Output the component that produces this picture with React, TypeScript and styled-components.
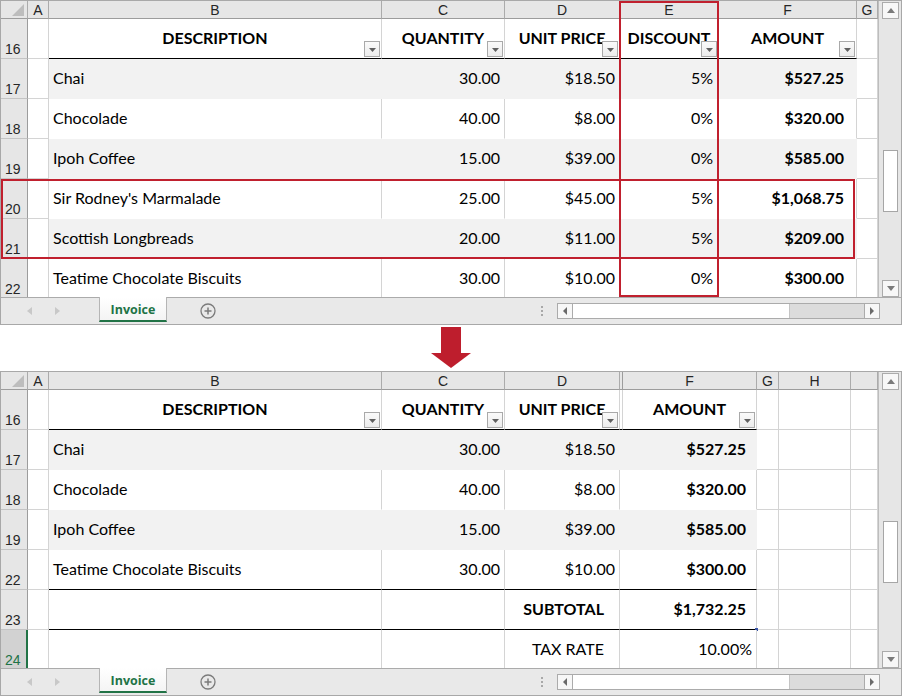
import React from "react";
import styled, { createGlobalStyle } from "styled-components";

// 시트 데이터
type Col = { letter: string; width: number; field?: number; pad?: number; hidden?: boolean };
type RowKind = "head" | "item" | "subtotal" | "tax";
type Row = {
  num: number;
  kind: RowKind;
  cells: string[];
  band?: boolean;
  ruleBelow?: boolean;
  handle?: boolean;
  selected?: boolean;
};

const topCols: Col[] = [
  { letter: "A", width: 21 },
  { letter: "B", width: 333, field: 0, pad: 4 },
  { letter: "C", width: 123, field: 1, pad: 4 },
  { letter: "D", width: 115, field: 2, pad: 4 },
  { letter: "E", width: 99, field: 3, pad: 5 },
  { letter: "F", width: 138, field: 4, pad: 12 },
  { letter: "G", width: 21 },
];

const bottomCols: Col[] = [
  { letter: "A", width: 21 },
  { letter: "B", width: 333, field: 0, pad: 4 },
  { letter: "C", width: 123, field: 1, pad: 4 },
  { letter: "D", width: 115, field: 2, pad: 4 },
  { letter: "", width: 3, field: 3, hidden: true },
  { letter: "F", width: 134, field: 4, pad: 10 },
  { letter: "G", width: 22 },
  { letter: "H", width: 72 },
  { letter: "", width: 27 },
];

const headRow: Row = {
  num: 16,
  kind: "head",
  cells: ["DESCRIPTION", "QUANTITY", "UNIT PRICE", "DISCOUNT", "AMOUNT"],
  ruleBelow: true,
};

const items: Record<number, Row> = {
  17: { num: 17, kind: "item", band: true, cells: ["Chai", "30.00", "$18.50", "5%", "$527.25"] },
  18: { num: 18, kind: "item", cells: ["Chocolade", "40.00", "$8.00", "0%", "$320.00"] },
  19: { num: 19, kind: "item", band: true, cells: ["Ipoh Coffee", "15.00", "$39.00", "0%", "$585.00"] },
  20: { num: 20, kind: "item", cells: ["Sir Rodney's Marmalade", "25.00", "$45.00", "5%", "$1,068.75"] },
  21: { num: 21, kind: "item", band: true, cells: ["Scottish Longbreads", "20.00", "$11.00", "5%", "$209.00"] },
  22: { num: 22, kind: "item", cells: ["Teatime Chocolate Biscuits", "30.00", "$10.00", "0%", "$300.00"] },
};

const topRows: Row[] = [headRow, items[17], items[18], items[19], items[20], items[21], items[22]];

const bottomRows: Row[] = [
  headRow,
  items[17],
  items[18],
  items[19],
  { ...items[22], ruleBelow: true },
  { num: 23, kind: "subtotal", cells: ["", "", "SUBTOTAL", "", "$1,732.25"], ruleBelow: true, handle: true },
  { num: 24, kind: "tax", cells: ["", "", "TAX RATE", "", "10.00%"], selected: true },
];

const cellLayout = (col: Col, row: Row) => {
  const field = col.field ?? 0;
  if (row.kind === "head") return { align: "center", pad: 0, strong: true };
  if (field === 0) return { align: "left", pad: col.pad ?? 4, strong: false };
  if (row.kind === "subtotal") return { align: "right", pad: field === 2 ? 15 : col.pad ?? 4, strong: true };
  if (row.kind === "tax") return { align: "right", pad: field === 2 ? 15 : 4, strong: false };
  return { align: "right", pad: col.pad ?? 4, strong: field === 4 };
};

const Sheet: React.FC<{ cols: Col[]; rows: Row[]; marks?: React.ReactNode }> = ({ cols, rows, marks }) => {
  const template = ["27px", ...cols.map(c => `${c.width}px`)].join(" ");
  return (
    <SheetWindow>
      <Body>
        <GridArea $cols={template}>
          <Corner>
            <svg width="12" height="12" viewBox="0 0 12 12">
              <path d="M12 0 L12 12 L0 12 Z" fill="#bdbdbd" />
            </svg>
          </Corner>
          {cols.map((c, i) => (
            <ColHead key={`h${i}`} $hidden={c.hidden}>{c.letter}</ColHead>
          ))}
          {rows.map(row => (
            <React.Fragment key={row.num}>
              <RowHead $selected={row.selected}>{row.num}</RowHead>
              {cols.map((col, i) => {
                if (col.field === undefined) return <BlankCell key={i} />;
                const layout = cellLayout(col, row);
                const text = col.hidden ? "" : row.cells[col.field];
                return (
                  <Cell
                    key={i}
                    $band={row.band}
                    $align={layout.align}
                    $pad={layout.pad}
                    $strong={layout.strong}
                    $ruleBelow={row.ruleBelow}
                    $handle={row.handle && col.field === 4}
                  >
                    {text}
                    {row.kind === "head" && !col.hidden && (
                      <Dropdown>
                        <svg width="7" height="4" viewBox="0 0 7 4">
                          <path d="M0 0 H7 L3.5 4 Z" fill="#606060" />
                        </svg>
                      </Dropdown>
                    )}
                  </Cell>
                );
              })}
            </React.Fragment>
          ))}
        </GridArea>
        <VScroll>
          <ScrollButton>
            <svg width="8" height="5" viewBox="0 0 8 5">
              <path d="M0 5 H8 L4 0 Z" fill="#7a7a7a" />
            </svg>
          </ScrollButton>
          <VTrack>
            <VThumb />
          </VTrack>
          <ScrollButton>
            <svg width="8" height="5" viewBox="0 0 8 5">
              <path d="M0 0 H8 L4 5 Z" fill="#7a7a7a" />
            </svg>
          </ScrollButton>
        </VScroll>
        {marks}
      </Body>
      <TabBar>
        <NavArrows>
          <svg width="5" height="8" viewBox="0 0 5 8">
            <path d="M5 0 V8 L0 4 Z" fill="#c8c8c8" />
          </svg>
          <svg width="5" height="8" viewBox="0 0 5 8">
            <path d="M0 0 V8 L5 4 Z" fill="#c8c8c8" />
          </svg>
        </NavArrows>
        <Tab>Invoice</Tab>
        <AddSheet>
          <svg width="16" height="16" viewBox="0 0 16 16">
            <circle cx="8" cy="8" r="7" fill="none" stroke="#7b7b7b" strokeWidth="1.3" />
            <path d="M8 4.5 V11.5 M4.5 8 H11.5" stroke="#7b7b7b" strokeWidth="1.5" />
          </svg>
        </AddSheet>
        <Spacer />
        <Grip>
          <i />
          <i />
          <i />
        </Grip>
        <HScroll>
          <HButton>
            <svg width="4" height="8" viewBox="0 0 4 8">
              <path d="M4 0 V8 L0 4 Z" fill="#6a6a6a" />
            </svg>
          </HButton>
          <HThumb />
          <HTrack />
          <HButton>
            <svg width="4" height="8" viewBox="0 0 4 8">
              <path d="M0 0 V8 L4 4 Z" fill="#6a6a6a" />
            </svg>
          </HButton>
        </HScroll>
      </TabBar>
    </SheetWindow>
  );
};

const App: React.FC = () => (
  <Page>
    <GlobalStyle />
    <Sheet
      cols={topCols}
      rows={topRows}
      marks={
        <>
          <Mark $left={0} $top={178} $width={854} $height={80} />
          <Mark $left={618} $top={0} $width={100} $height={296} />
        </>
      }
    />
    <ArrowGap>
      <svg width="40" height="43" viewBox="0 0 40 43">
        <rect x="10" y="1" width="20" height="26" fill="#be1e2d" />
        <polygon points="0,27 40,27 20,42" fill="#be1e2d" />
      </svg>
    </ArrowGap>
    <Sheet cols={bottomCols} rows={bottomRows} />
  </Page>
);

// 스타일 컴포넌트
const GlobalStyle = createGlobalStyle`
  html, body {
    margin: 0;
    padding: 0;
    background: #fff;
  }
  body {
    font-family: "Lato", "Liberation Sans", sans-serif;
  }
`;

const Page = styled.div`
  width: 902px;
  display: flex;
  flex-direction: column;
`;

const SheetWindow = styled.div`
  height: 325px;
  box-sizing: border-box;
  border: 1px solid #a8a8a8;
  display: flex;
  flex-direction: column;
  background: #fff;
`;

const Body = styled.div`
  position: relative;
  display: flex;
  height: 296px;
`;

const GridArea = styled.div<{ $cols: string }>`
  flex: 1;
  overflow: hidden;
  display: grid;
  grid-template-columns: ${p => p.$cols};
  grid-template-rows: 18px;
  grid-auto-rows: 40px;
  align-content: start;
`;

const Corner = styled.div`
  box-sizing: border-box;
  background: #e6e6e6;
  border-right: 1px solid #ababab;
  border-bottom: 1px solid #9c9c9c;
  display: flex;
  align-items: flex-end;
  justify-content: flex-end;
  padding: 0 3px 2px 0;
`;

const ColHead = styled.div<{ $hidden?: boolean }>`
  box-sizing: border-box;
  background: #e6e6e6;
  border-right: 1px solid ${p => (p.$hidden ? "#9c9c9c" : "#ababab")};
  border-bottom: 1px solid #9c9c9c;
  display: flex;
  align-items: center;
  justify-content: center;
  font-family: "Liberation Sans", Arial, sans-serif;
  font-size: 14px;
  color: #262626;
  overflow: hidden;
`;

const RowHead = styled.div<{ $selected?: boolean }>`
  box-sizing: border-box;
  background: ${p => (p.$selected ? "#d2d2d2" : "#e6e6e6")};
  border-right: ${p => (p.$selected ? "2px solid #217346" : "1px solid #9c9c9c")};
  border-bottom: 1px solid #c4c4c4;
  display: flex;
  align-items: flex-end;
  padding: 0 0 1px 4px;
  font-family: "Liberation Sans", Arial, sans-serif;
  font-size: 14px;
  color: ${p => (p.$selected ? "#217346" : "#262626")};
`;

const BlankCell = styled.div`
  box-sizing: border-box;
  background: #fff;
  border-right: 1px solid #d4d4d4;
  border-bottom: 1px solid #d4d4d4;
`;

const Cell = styled.div<{
  $band?: boolean;
  $align: string;
  $pad: number;
  $strong?: boolean;
  $ruleBelow?: boolean;
  $handle?: boolean;
}>`
  position: relative;
  box-sizing: border-box;
  display: flex;
  align-items: center;
  justify-content: ${p => (p.$align === "left" ? "flex-start" : p.$align === "center" ? "center" : "flex-end")};
  padding-left: ${p => (p.$align === "left" ? p.$pad : 0)}px;
  padding-right: ${p => (p.$align === "right" ? p.$pad : 0)}px;
  padding-bottom: 2px;
  background: ${p => (p.$band ? "#f2f2f2" : "#fff")};
  border-right: 1px solid ${p => (p.$band ? "#f2f2f2" : "#d4d4d4")};
  border-bottom: 1px solid ${p => (p.$ruleBelow ? "#000" : p.$band ? "#f2f2f2" : "#fff")};
  font-size: 16px;
  font-weight: ${p => (p.$strong ? 700 : 400)};
  color: #000;
  white-space: nowrap;

  &::after {
    content: "";
    display: ${p => (p.$handle ? "block" : "none")};
    position: absolute;
    right: -2px;
    bottom: -2px;
    width: 3px;
    height: 3px;
    background: #3b56a8;
  }
`;

const Dropdown = styled.span`
  position: absolute;
  right: 1px;
  bottom: 1px;
  width: 16px;
  height: 16px;
  box-sizing: border-box;
  border: 1px solid #a9a9a9;
  background: linear-gradient(#fafafa, #ececec);
  display: flex;
  align-items: center;
  justify-content: center;
  padding-top: 1px;
`;

const Mark = styled.div<{ $left: number; $top: number; $width: number; $height: number }>`
  position: absolute;
  left: ${p => p.$left}px;
  top: ${p => p.$top}px;
  width: ${p => p.$width}px;
  height: ${p => p.$height}px;
  box-sizing: border-box;
  border: 2px solid #c0202e;
  pointer-events: none;
`;

const VScroll = styled.div`
  width: 23px;
  box-sizing: border-box;
  background: #e6e6e6;
  border-left: 1px solid #bdbdbd;
  padding: 1px 2px 0 3px;
  display: flex;
  flex-direction: column;
`;

const ScrollButton = styled.div`
  height: 17px;
  box-sizing: border-box;
  border: 1px solid #ababab;
  background: #f7f7f7;
  display: flex;
  align-items: center;
  justify-content: center;
`;

const VTrack = styled.div`
  flex: 1;
  padding: 131px 1px 0;
`;

const VThumb = styled.div`
  height: 62px;
  box-sizing: border-box;
  border: 1px solid #a6a6a6;
  background: #fff;
`;

const TabBar = styled.div`
  height: 27px;
  box-sizing: border-box;
  border-top: 1px solid #ababab;
  background: #e9e9e9;
  display: flex;
  align-items: flex-start;
`;

const NavArrows = styled.div`
  width: 98px;
  height: 26px;
  display: flex;
  align-items: center;
  gap: 23px;
  padding-left: 26px;
  box-sizing: border-box;
`;

const Tab = styled.div`
  width: 68px;
  height: 25px;
  box-sizing: border-box;
  margin-top: -1px;
  padding-top: 1px;
  background: linear-gradient(#ffffff, #f4f4f4);
  border-left: 1px solid #b5b5b5;
  border-right: 1px solid #b5b5b5;
  border-bottom: 2px solid #217346;
  display: flex;
  align-items: center;
  justify-content: center;
  font-family: "Open Sans", "Liberation Sans", sans-serif;
  font-size: 12.5px;
  font-weight: 700;
  color: #217346;
`;

const AddSheet = styled.div`
  height: 26px;
  margin-left: 33px;
  display: flex;
  align-items: center;
`;

const Spacer = styled.div`
  flex: 1;
`;

const Grip = styled.div`
  height: 26px;
  margin-right: 14px;
  display: flex;
  flex-direction: column;
  justify-content: center;
  gap: 2px;

  i {
    display: block;
    width: 2px;
    height: 2px;
    background: #a8a8a8;
  }
`;

const HScroll = styled.div`
  width: 323px;
  height: 16px;
  margin: 5px 21px 0 0;
  box-sizing: border-box;
  border: 1px solid #ababab;
  background: #dcdcdc;
  display: flex;
`;

const HButton = styled.div`
  width: 14px;
  background: #f7f7f7;
  display: flex;
  align-items: center;
  justify-content: center;
`;

const HThumb = styled.div`
  width: 218px;
  box-sizing: border-box;
  background: #fff;
  border-left: 1px solid #ababab;
  border-right: 1px solid #c4c4c4;
`;

const HTrack = styled.div`
  flex: 1;
  border-right: 1px solid #ababab;
`;

const ArrowGap = styled.div`
  height: 46px;
  display: flex;
  justify-content: center;
  align-items: flex-start;
  padding-top: 1px;
  box-sizing: border-box;
`;

export default App;
